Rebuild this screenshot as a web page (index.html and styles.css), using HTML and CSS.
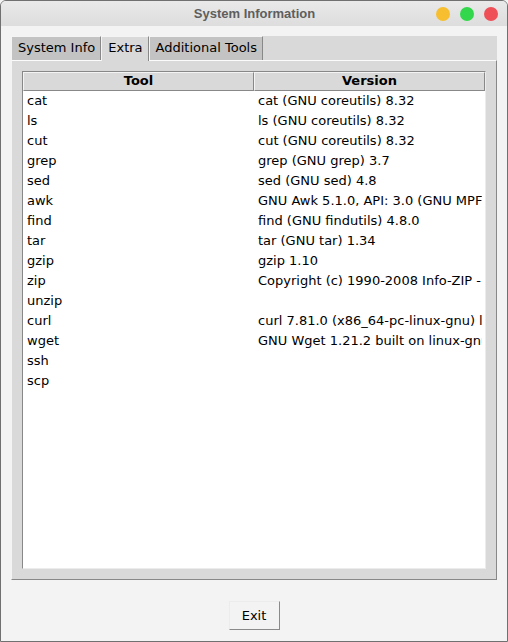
FILE: index.html
```html
<!DOCTYPE html>
<html>
<head>
<meta charset="utf-8">
<link rel="stylesheet" href="styles.css">
</head>
<body>
<div class="window">
  <div class="titlebar">
    <div></div>
    <div class="title">System Information</div>
    <div class="controls">
      <span class="dot dot-min"></span>
      <span class="dot dot-max"></span>
      <span class="dot dot-close"></span>
    </div>
  </div>
  <div class="content">
    <div class="notebook">
      <div class="tabs">
        <div class="tab">System Info</div>
        <div class="tab active">Extra</div>
        <div class="tab">Additional Tools</div>
      </div>
      <div class="panel">
        <div class="tree">
          <div class="head">
            <div class="hcell col-tool">Tool</div>
            <div class="hcell col-ver">Version</div>
          </div>
          <div class="rows">
            <div class="row"><div class="cell col-tool">cat</div><div class="cell col-ver">cat (GNU coreutils) 8.32</div></div>
            <div class="row"><div class="cell col-tool">ls</div><div class="cell col-ver">ls (GNU coreutils) 8.32</div></div>
            <div class="row"><div class="cell col-tool">cut</div><div class="cell col-ver">cut (GNU coreutils) 8.32</div></div>
            <div class="row"><div class="cell col-tool">grep</div><div class="cell col-ver">grep (GNU grep) 3.7</div></div>
            <div class="row"><div class="cell col-tool">sed</div><div class="cell col-ver">sed (GNU sed) 4.8</div></div>
            <div class="row"><div class="cell col-tool">awk</div><div class="cell col-ver">GNU Awk 5.1.0, API: 3.0 (GNU MPFR 4.1.0, GNU MP 6.2.1)</div></div>
            <div class="row"><div class="cell col-tool">find</div><div class="cell col-ver">find (GNU findutils) 4.8.0</div></div>
            <div class="row"><div class="cell col-tool">tar</div><div class="cell col-ver">tar (GNU tar) 1.34</div></div>
            <div class="row"><div class="cell col-tool">gzip</div><div class="cell col-ver">gzip 1.10</div></div>
            <div class="row"><div class="cell col-tool">zip</div><div class="cell col-ver">Copyright (c) 1990-2008 Info-ZIP - Type 'zip "-L"' for software license.</div></div>
            <div class="row"><div class="cell col-tool">unzip</div><div class="cell col-ver"></div></div>
            <div class="row"><div class="cell col-tool">curl</div><div class="cell col-ver">curl 7.81.0 (x86_64-pc-linux-gnu) libcurl/7.81.0 OpenSSL/3.0.2</div></div>
            <div class="row"><div class="cell col-tool">wget</div><div class="cell col-ver">GNU Wget 1.21.2 built on linux-gnu.</div></div>
            <div class="row"><div class="cell col-tool">ssh</div><div class="cell col-ver"></div></div>
            <div class="row"><div class="cell col-tool">scp</div><div class="cell col-ver"></div></div>
          </div>
        </div>
      </div>
    </div>
    <div class="footer">
      <button class="btn">Exit</button>
    </div>
  </div>
</div>
</body>
</html>
```

FILE: styles.css
```css
* { box-sizing: border-box; }
html, body {
  margin: 0;
  padding: 0;
  background: #f3f3f3;
}
body {
  font-family: "DejaVu Sans", sans-serif;
  font-size: 13px;
  color: #000;
}
.window {
  width: 508px;
  height: 642px;
  border: 1px solid #707070;
  border-radius: 6px 6px 0 0;
  background: #f3f3f3;
  display: flex;
  flex-direction: column;
  overflow: hidden;
}
.titlebar {
  height: 25px;
  flex: none;
  display: grid;
  grid-template-columns: 1fr auto 1fr;
  align-items: center;
  background: linear-gradient(#e9e9e9, #dddddd);
}
.title {
  font-family: "Liberation Sans", "DejaVu Sans", sans-serif;
  font-weight: bold;
  font-size: 13px;
  color: #5e5e5e;
  padding-left: 1px;
}
.controls {
  display: flex;
  justify-content: flex-end;
  gap: 10px;
  padding-right: 9px;
}
.dot {
  width: 14px;
  height: 14px;
  border-radius: 50%;
  display: block;
}
.dot-min { background: #f7bf30; }
.dot-max { background: #32d74b; }
.dot-close { background: #ef4f57; }
.content {
  flex: 1;
  display: flex;
  flex-direction: column;
  padding: 10px 10px 0 10px;
}
.notebook {
  display: flex;
  flex-direction: column;
  background: #d9d9d9;
}
.tabs {
  height: 24px;
  display: flex;
  align-items: flex-end;
  background: #d9d9d9;
}
.tab {
  height: 24px;
  padding: 1px 5px 0 6px;
  background: #c3c3c3;
  border-left: 1px solid #f4f4f4;
  border-top: 1px solid #f4f4f4;
  border-right: 1px solid #888;
  line-height: 19px;
  white-space: nowrap;
}
.tab.active {
  background: #d9d9d9;
  height: 25px;
  margin-bottom: -1px;
  position: relative;
  z-index: 1;
  padding-top: 1px;
}
.panel {
  height: 520px;
  border-top: 1px solid #fbfbfb;
  border-left: 1px solid #f4f4f4;
  border-right: 1px solid #888;
  border-bottom: 1px solid #888;
  background: #d9d9d9;
  padding: 10px;
}
.tree {
  height: 498px;
  background: #fff;
  border-top: 1px solid #888;
  border-left: 1px solid #888;
  border-right: 1px solid #ececec;
  border-bottom: 1px solid #ececec;
  display: flex;
  flex-direction: column;
  overflow: hidden;
}
.head {
  display: flex;
  height: 19px;
  flex: none;
}
.hcell {
  background: #d9d9d9;
  border-top: 1px solid #f4f4f4;
  border-left: 1px solid #f4f4f4;
  border-right: 1px solid #888;
  border-bottom: 1px solid #888;
  font-weight: bold;
  text-align: center;
  line-height: 15px;
}
.col-tool { width: 231px; flex: none; }
.col-ver { flex: 1; min-width: 0; }
.row {
  display: flex;
  height: 20px;
  line-height: 19px;
}
.cell {
  padding-left: 4px;
  white-space: nowrap;
  overflow: hidden;
}
.cell.col-ver { margin-right: 3px; }
.footer {
  display: flex;
  justify-content: center;
  padding-top: 21px;
}
.btn {
  width: 51px;
  height: 29px;
  font-family: "DejaVu Sans", sans-serif;
  font-size: 13px;
  color: #000;
  background: #f3f3f3;
  border-top: 1px solid #ececec;
  border-left: 1px solid #ececec;
  border-right: 1px solid #8a8a8a;
  border-bottom: 1px solid #8a8a8a;
  padding: 0;
  margin: 0;
}
```
